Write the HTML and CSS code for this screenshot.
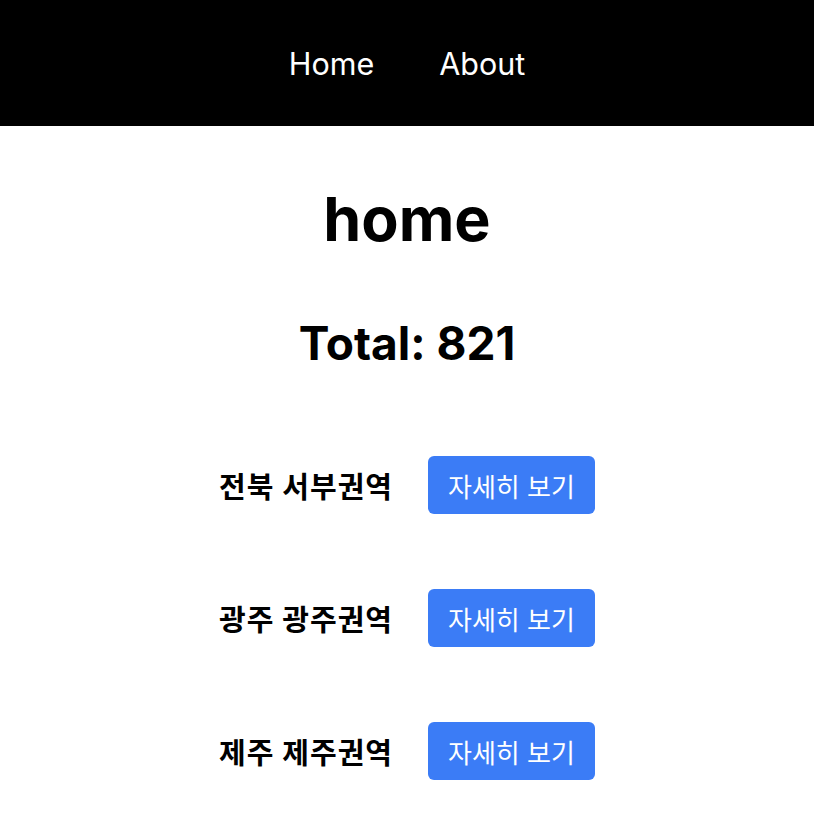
FILE: index.html
```html
<!DOCTYPE html>
<html lang="ko">
<head>
<meta charset="utf-8">
<title>home</title>
<link rel="stylesheet" href="styles.css">
</head>
<body>
<nav class="nav">
  <a class="nav-link" href="#">Home</a>
  <a class="nav-link" href="#">About</a>
</nav>
<main class="main">
  <h1 class="title">home</h1>
  <h2 class="total">Total: 821</h2>
  <ul class="list">
    <li class="row"><span class="label">전북 서부권역</span><button class="btn">자세히 보기</button></li>
    <li class="row"><span class="label">광주 광주권역</span><button class="btn">자세히 보기</button></li>
    <li class="row"><span class="label">제주 제주권역</span><button class="btn">자세히 보기</button></li>
  </ul>
</main>
</body>
</html>
```
FILE: styles.css
```css
html, body {
  margin: 0;
  padding: 0;
  background: #fff;
  color: #000;
  font-family: Inter, "Noto Sans CJK KR", sans-serif;
}
.nav {
  height: 126px;
  background: #000;
  display: flex;
  justify-content: center;
  align-items: center;
  gap: 65px;
}
.nav-link {
  color: #fff;
  text-decoration: none;
  font-size: 30.5px;
}
.main {
  display: flex;
  flex-direction: column;
  align-items: center;
}
.title {
  font-size: 61px;
  font-weight: 700;
  margin: 57px 0 0;
  line-height: 72px;
}
.total {
  font-size: 46px;
  font-weight: 700;
  margin: 60px 0 0;
  line-height: 56px;
}
.list {
  list-style: none;
  margin: 85px 0 0;
  padding: 0;
  display: flex;
  flex-direction: column;
  gap: 75px;
}
.row {
  display: flex;
  align-items: center;
  gap: 35px;
}
.label {
  font-size: 29px;
  font-weight: 700;
  letter-spacing: 1px;
  font-family: Inter, "Noto Sans CJK KR", sans-serif;
}
.btn {
  height: 58px;
  padding: 0 20px;
  border: none;
  border-radius: 6px;
  background: #3b7cf6;
  color: #fff;
  font-size: 26px;
  font-family: Inter, "Noto Sans CJK KR", sans-serif;
}
```
